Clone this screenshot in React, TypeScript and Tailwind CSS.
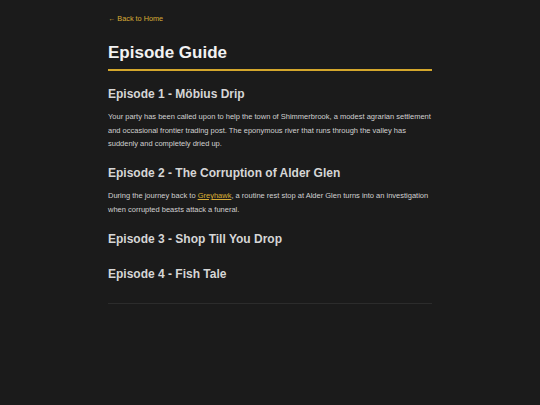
const episodes = [
  {
    title: "Episode 1 - Möbius Drip",
    body: (
      <>
        Your party has been called upon to help the town of Shimmerbrook, a
        modest agrarian settlement and occasional frontier trading post. The
        eponymous river that runs through the valley has suddenly and
        completely dried up.
      </>
    ),
  },
  {
    title: "Episode 2 - The Corruption of Alder Glen",
    body: (
      <>
        During the journey back to{" "}
        <a href="#" className="text-[#d9ad36] underline">
          Greyhawk
        </a>
        , a routine rest stop at Alder Glen turns into an investigation when
        corrupted beasts attack a funeral.
      </>
    ),
  },
  { title: "Episode 3 - Shop Till You Drop" },
  { title: "Episode 4 - Fish Tale" },
];

export default function App() {
  return (
    <div
      className="min-h-[405px] bg-[#1b1b1b] text-[#d4d4d4]"
      style={{ fontFamily: '"Liberation Sans", Arial, sans-serif' }}
    >
      <div className="mx-auto w-[324px] pt-[14px]">
        <a href="#" className="block text-[7.3px] leading-[10px] text-[#d9ad36]">
          ← Back to Home
        </a>

        <h1 className="mt-[17px] border-b-2 border-[#d4a72c] pb-[5px] text-[17px] leading-[23px] font-bold text-[#f2f2f2]">
          Episode Guide
        </h1>

        <div className="mt-[15px]">
          {episodes.map((episode, i) => (
            <section
              key={episode.title}
              className={(i === 0 ? "" : "mt-[14.5px] ") + (episode.body ? "" : "pb-[4px]")}
            >
              <h2 className="text-[12px] leading-[17px] font-bold text-[#d6d6d6]">
                {episode.title}
              </h2>
              {episode.body && (
                <p className="mt-[7px] text-[7.5px] leading-[13.5px] text-[#d0d0d0]">
                  {episode.body}
                </p>
              )}
            </section>
          ))}
        </div>

        <div className="mt-[16px] h-px bg-[#2c2c2c]" />
      </div>
    </div>
  );
}
